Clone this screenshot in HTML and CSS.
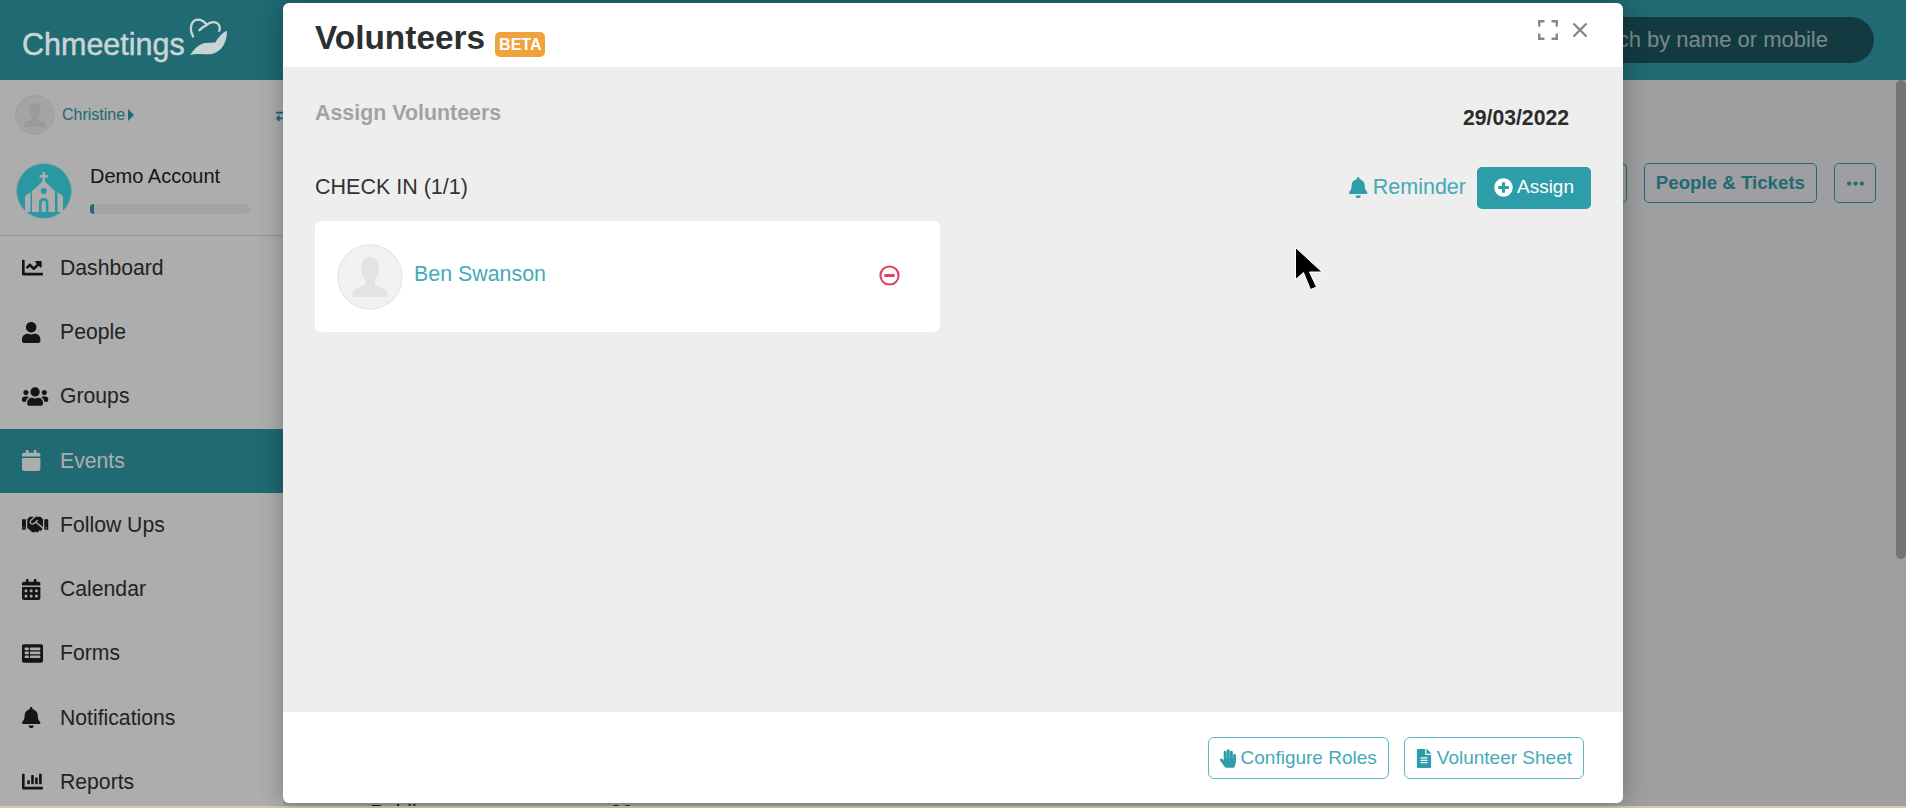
FILE: index.html
```html
<!DOCTYPE html>
<html lang="en">
<head>
  <meta charset="UTF-8" />
  <meta name="viewport" content="width=device-width, initial-scale=1" />
  <title>Volunteers - Chmeetings</title>
  <link rel="stylesheet" href="styles.css">
</head>
<body>
  <svg class="sprite" aria-hidden="true">
    <symbol id="i-chart-line" viewBox="0 0 512 512" preserveAspectRatio="xMinYMid meet"><path d="M496 384H64V80c0-8.84-7.16-16-16-16H16C7.16 64 0 71.16 0 80v336c0 17.67 14.33 32 32 32h464c8.84 0 16-7.16 16-16v-32c0-8.84-7.16-16-16-16zM464 96H345.94c-21.38 0-32.09 25.85-16.97 40.97l32.4 32.4L288 242.75l-73.37-73.37c-12.5-12.5-32.76-12.5-45.25 0l-68.69 68.69c-6.25 6.25-6.25 16.38 0 22.63l22.62 22.62c6.25 6.25 16.38 6.25 22.63 0L192 237.25l73.37 73.37c12.5 12.5 32.76 12.5 45.25 0l96-96 32.4 32.4c15.12 15.12 40.97 4.41 40.97-16.97V112c.01-8.84-7.15-16-15.99-16z"/></symbol>
    <symbol id="i-user" viewBox="0 0 448 512" preserveAspectRatio="xMinYMid meet"><path d="M224 256c70.7 0 128-57.3 128-128S294.7 0 224 0 96 57.3 96 128s57.3 128 128 128zm89.6 32h-16.7c-22.2 10.2-46.9 16-72.9 16s-50.6-5.8-72.9-16h-16.7C60.2 288 0 348.2 0 422.4V464c0 26.5 21.5 48 48 48h352c26.5 0 48-21.5 48-48v-41.6c0-74.2-60.2-134.4-134.4-134.4z"/></symbol>
    <symbol id="i-users" viewBox="0 0 640 512" preserveAspectRatio="xMinYMid meet"><path d="M96 224c35.3 0 64-28.7 64-64s-28.7-64-64-64-64 28.7-64 64 28.7 64 64 64zm448 0c35.3 0 64-28.7 64-64s-28.7-64-64-64-64 28.7-64 64 28.7 64 64 64zm32 32h-64c-17.6 0-33.5 7.1-45.1 18.6 40.3 22.1 68.9 62 75.1 109.4h66c17.7 0 32-14.3 32-32v-32c0-35.3-28.7-64-64-64zm-256 0c61.9 0 112-50.1 112-112S381.9 32 320 32 208 82.1 208 144s50.1 112 112 112zm76.8 32h-8.3c-20.8 10-43.9 16-68.5 16s-47.6-6-68.5-16h-8.3C179.6 288 128 339.6 128 403.2V432c0 26.5 21.5 48 48 48h288c26.5 0 48-21.5 48-48v-28.8c0-63.6-51.6-115.2-115.2-115.2zm-223.7-13.4C161.5 263.1 145.6 256 128 256H64c-35.3 0-64 28.7-64 64v32c0 17.7 14.3 32 32 32h65.9c6.3-47.4 34.9-87.3 75.2-109.4z"/></symbol>
    <symbol id="i-calendar" viewBox="0 0 448 512" preserveAspectRatio="xMinYMid meet"><path d="M12 192h424c6.6 0 12 5.4 12 12v260c0 26.5-21.5 48-48 48H48c-26.5 0-48-21.5-48-48V204c0-6.6 5.4-12 12-12zm436-44v-36c0-26.5-21.5-48-48-48h-48V12c0-6.6-5.4-12-12-12h-40c-6.6 0-12 5.4-12 12v52H160V12c0-6.6-5.4-12-12-12h-40c-6.6 0-12 5.4-12 12v52H48C21.5 64 0 85.5 0 112v36c0 6.6 5.4 12 12 12h424c6.6 0 12-5.4 12-12z"/></symbol>
    <symbol id="i-handshake" viewBox="0 0 640 512" preserveAspectRatio="xMinYMid meet"><path d="M434.7 64h-85.9c-8 0-15.7 3-21.6 8.4l-98.3 90c-.1.1-.2.3-.3.4-16.6 15.6-16.3 40.5-2.1 56 12.7 13.9 39.4 17.6 56.1 2.7.1-.1.3-.1.4-.2l79.9-73.2c6.5-5.9 16.7-5.5 22.6 1 6 6.5 5.5 16.6-1 22.6l-26.1 23.9L504 313.8c2.9 2.4 5.5 5 7.9 7.7V128l-54.6-54.6c-5.9-6-14.1-9.4-22.6-9.4zM544 128.2v223.9c0 17.7 14.3 32 32 32h64V128.2h-96zm48 223.9c-8.8 0-16-7.2-16-16s7.2-16 16-16 16 7.2 16 16-7.2 16-16 16zM0 384h64c17.7 0 32-14.3 32-32V128.2H0V384zm48-63.9c8.8 0 16 7.2 16 16s-7.2 16-16 16-16-7.2-16-16c0-8.9 7.2-16 16-16zm435.9 18.6L334.6 217.5l-30 27.5c-29.7 27.1-75.2 24.5-101.7-4.4-26.9-29.4-24.8-74.9 4.4-101.7L289.1 64h-83.8c-8.5 0-16.6 3.4-22.6 9.4L128 128v223.9h18.3l90.5 81.9c27.4 22.3 67.7 18.1 90-9.3l.2-.2 17.9 15.5c15.9 13 39.4 10.5 52.3-5.4l31.4-38.6 5.4 4.4c13.7 11.1 33.9 9.1 45-4.7l9.5-11.7c11.2-13.8 9.1-33.9-4.6-45.1z"/></symbol>
    <symbol id="i-calendar-alt" viewBox="0 0 448 512" preserveAspectRatio="xMinYMid meet"><path d="M0 464c0 26.5 21.5 48 48 48h352c26.5 0 48-21.5 48-48V192H0v272zm320-196c0-6.6 5.4-12 12-12h40c6.6 0 12 5.4 12 12v40c0 6.6-5.4 12-12 12h-40c-6.6 0-12-5.4-12-12v-40zm0 128c0-6.6 5.4-12 12-12h40c6.6 0 12 5.4 12 12v40c0 6.6-5.4 12-12 12h-40c-6.6 0-12-5.4-12-12v-40zM192 268c0-6.6 5.4-12 12-12h40c6.6 0 12 5.4 12 12v40c0 6.6-5.4 12-12 12h-40c-6.6 0-12-5.4-12-12v-40zm0 128c0-6.6 5.4-12 12-12h40c6.6 0 12 5.4 12 12v40c0 6.6-5.4 12-12 12h-40c-6.6 0-12-5.4-12-12v-40zM64 268c0-6.6 5.4-12 12-12h40c6.6 0 12 5.4 12 12v40c0 6.6-5.4 12-12 12H76c-6.6 0-12-5.4-12-12v-40zm0 128c0-6.6 5.4-12 12-12h40c6.6 0 12 5.4 12 12v40c0 6.6-5.4 12-12 12H76c-6.6 0-12-5.4-12-12v-40zM400 64h-48V16c0-8.8-7.2-16-16-16h-32c-8.8 0-16 7.2-16 16v48H160V16c0-8.8-7.2-16-16-16h-32c-8.8 0-16 7.2-16 16v48H48C21.5 64 0 85.5 0 112v48h448v-48c0-26.5-21.5-48-48-48z"/></symbol>
    <symbol id="i-forms" viewBox="0 0 512 512" preserveAspectRatio="xMinYMid meet"><path fill-rule="evenodd" d="M48 32h416c26.5 0 48 21.5 48 48v352c0 26.5-21.5 48-48 48H48c-26.5 0-48-21.5-48-48V80c0-26.5 21.5-48 48-48zM80 112c-8 0-16 8-16 16v32c0 8 8 16 16 16h72c8 0 16-8 16-16v-32c0-8-8-16-16-16zm128 0c-8 0-16 8-16 16v32c0 8 8 16 16 16h224c8 0 16-8 16-16v-32c0-8-8-16-16-16zM80 208c-8 0-16 8-16 16v32c0 8 8 16 16 16h72c8 0 16-8 16-16v-32c0-8-8-16-16-16zm128 0c-8 0-16 8-16 16v32c0 8 8 16 16 16h224c8 0 16-8 16-16v-32c0-8-8-16-16-16zM80 304c-8 0-16 8-16 16v32c0 8 8 16 16 16h72c8 0 16-8 16-16v-32c0-8-8-16-16-16zm128 0c-8 0-16 8-16 16v32c0 8 8 16 16 16h224c8 0 16-8 16-16v-32c0-8-8-16-16-16z"/></symbol>
    <symbol id="i-bell" viewBox="0 0 448 512" preserveAspectRatio="xMinYMid meet"><path d="M224 512c35.32 0 63.97-28.65 63.97-64H160.03c0 35.35 28.65 64 63.97 64zm215.39-149.71c-19.32-20.76-55.47-51.99-55.47-154.29 0-77.7-54.48-139.9-127.94-155.16V32c0-17.67-14.32-32-31.98-32s-31.98 14.33-31.98 32v20.84C118.56 68.1 64.08 130.3 64.08 208c0 102.3-36.15 133.53-55.47 154.29-6 6.45-8.66 14.16-8.61 21.71.11 16.4 12.98 32 32.1 32h383.8c19.12 0 32-15.6 32.1-32 .05-7.55-2.61-15.27-8.61-21.71z"/></symbol>
    <symbol id="i-chart-bar" viewBox="0 0 512 512" preserveAspectRatio="xMinYMid meet"><path d="M332.8 320h38.4c6.4 0 12.8-6.4 12.8-12.8V172.8c0-6.4-6.4-12.8-12.8-12.8h-38.4c-6.4 0-12.8 6.4-12.8 12.8v134.4c0 6.4 6.4 12.8 12.8 12.8zm96 0h38.4c6.4 0 12.8-6.4 12.8-12.8V76.8c0-6.4-6.4-12.8-12.8-12.8h-38.4c-6.4 0-12.8 6.4-12.8 12.8v230.4c0 6.4 6.4 12.8 12.8 12.8zm-288 0h38.4c6.4 0 12.8-6.4 12.8-12.8v-70.4c0-6.4-6.4-12.8-12.8-12.8h-38.4c-6.4 0-12.8 6.4-12.8 12.8v70.4c0 6.4 6.4 12.8 12.8 12.8zm96 0h38.4c6.4 0 12.8-6.4 12.8-12.8V108.8c0-6.4-6.4-12.8-12.8-12.8h-38.4c-6.4 0-12.8 6.4-12.8 12.8v198.4c0 6.4 6.4 12.8 12.8 12.8zM496 384H64V80c0-8.84-7.16-16-16-16H16C7.16 64 0 71.16 0 80v336c0 17.67 14.33 32 32 32h464c8.84 0 16-7.16 16-16v-32c0-8.84-7.16-16-16-16z"/></symbol>
    <symbol id="i-plus-circle" viewBox="0 0 512 512"><path d="M256 8C119 8 8 119 8 256s111 248 248 248 248-111 248-248S393 8 256 8zm144 276c0 6.6-5.4 12-12 12h-92v92c0 6.6-5.4 12-12 12h-56c-6.6 0-12-5.4-12-12v-92h-92c-6.6 0-12-5.4-12-12v-56c0-6.6 5.4-12 12-12h92v-92c0-6.6 5.4-12 12-12h56c6.6 0 12 5.4 12 12v92h92c6.6 0 12 5.4 12 12v56z"/></symbol>
    <symbol id="i-hand" viewBox="0 0 448 512"><path d="M408.781 128.007C386.356 127.578 368 146.36 368 168.79V256h-8V79.79c0-22.43-18.356-41.212-40.781-40.783C297.488 39.423 280 57.169 280 79v177h-8V40.79C272 18.36 253.644-.422 231.219.007 209.488.423 192 18.169 192 40v216h-8V80.79c0-22.43-18.356-41.212-40.781-40.783C121.488 40.423 104 58.169 104 80v235.992l-31.648-43.519c-12.993-17.866-38.009-21.817-55.877-8.823-17.865 12.994-21.815 38.01-8.822 55.877l125.601 172.705A48 48 0 0 0 172.073 512h197.59c22.274 0 41.622-15.324 46.724-37.006l26.508-112.66a192.011 192.011 0 0 0 5.104-43.975V168c.001-21.831-17.487-39.577-39.218-39.993z"/></symbol>
    <symbol id="i-file" viewBox="0 0 384 512"><path d="M224 136V0H24C10.7 0 0 10.7 0 24v464c0 13.3 10.7 24 24 24h336c13.3 0 24-10.7 24-24V160H248c-13.2 0-24-10.8-24-24zm64 236c0 6.6-5.4 12-12 12H108c-6.6 0-12-5.4-12-12v-8c0-6.6 5.4-12 12-12h168c6.6 0 12 5.4 12 12v8zm0-64c0 6.6-5.4 12-12 12H108c-6.6 0-12-5.4-12-12v-8c0-6.6 5.4-12 12-12h168c6.6 0 12 5.4 12 12v8zm0-72v8c0 6.6-5.4 12-12 12H108c-6.6 0-12-5.4-12-12v-8c0-6.6 5.4-12 12-12h168c6.6 0 12 5.4 12 12zm96-114.1v6.1H256V0h6.1c6.4 0 12.5 2.5 17 7l97.9 98c4.5 4.5 7 10.6 7 16.9z"/></symbol>
    <symbol id="i-exchange" viewBox="0 0 512 512"><path d="M0 168v-16c0-13.255 10.745-24 24-24h360V80c0-21.367 25.899-32.042 40.971-16.971l80 80c9.372 9.373 9.372 24.569 0 33.941l-80 80C409.956 271.982 384 261.456 384 240v-48H24c-13.255 0-24-10.745-24-24zm488 152H128v-48c0-21.314-25.862-32.08-40.971-16.971l-80 80c-9.372 9.373-9.372 24.569 0 33.941l80 80C102.057 463.997 128 453.437 128 432v-48h360c13.255 0 24-10.745 24-24v-16c0-13.255-10.745-24-24-24z"/></symbol>
    <symbol id="i-avatar" viewBox="0 0 66 66">
      <circle cx="33" cy="33" r="32" fill="#f2f2f2" stroke="#e8e8e8" stroke-width="1.5"/>
      <path fill="#e2e3e3" d="M33 13c-6 0-9 5-9 11 0 5 2 9 4 12v3c0 3-5 4-9 6-3 1-4 3-4 6v2h36v-2c0-3-1-5-4-6-4-2-9-3-9-6v-3c2-3 4-7 4-12 0-6-3-11-9-11z"/>
    </symbol>
  </svg>

  <div class="app">
    <header class="topbar">
      <div class="logo">
        <span class="logo-text">Chmeetings</span>
        <svg class="logo-mark" viewBox="0 0 118 115" aria-hidden="true">
          <path fill="none" stroke="currentColor" stroke-width="7" stroke-linecap="round" d="M14 56C1 32 8 6 28 5c14 0 22 8 27 16 10-10 30-13 38 2 3 6 2 11 0 16M55 21c-8 4-16 9-22 16"/>
          <path fill="currentColor" d="M5 112c14-20 26-32 46-36l30-2c8-14 20-28 35-36 2 38-20 72-56 72-20 0-35-4-55 2z"/>
        </svg>
      </div>
      <div class="search">
        <input type="text" placeholder="Search by name or mobile" aria-label="Search by name or mobile" />
      </div>
    </header>

    <div class="layout">
      <aside class="sidebar">
        <div class="user-row">
          <svg class="user-avatar"><use href="#i-avatar"/></svg>
          <span class="user-name">Christine</span>
          <span class="user-caret"></span>
          <svg class="user-switch"><use href="#i-exchange"/></svg>
        </div>
        <div class="account">
          <svg class="account-logo" viewBox="0 0 56 56" aria-hidden="true">
            <circle cx="28" cy="28" r="27.5" fill="#3de0ee" stroke="#d8eef0" stroke-width="1"/>
            <path fill="#fff" d="M26.5 9h2.5v3h3v2.5h-3v4l10 9.5v21H16V28l10.5-9.5v-4h-3V12h3zM9 33l5.5-4v20H9zM47 33l-5.5-4v20H47z"/>
            <circle cx="27.7" cy="28" r="3" fill="#3de0ee"/>
            <path fill="#3de0ee" d="M23 49V40c0-3 2-5 4.7-5s4.700 2 4.700 5v9h-2.500v-9c0-1.500-1-2.500-2.200-2.500s-2.200 1-2.200 2.500v9z"/>
          </svg>
          <div class="account-info">
            <span class="account-name">Demo Account</span>
            <div class="progress"><div class="progress-fill"></div></div>
          </div>
        </div>
        <nav class="nav">
          <a class="nav-item"><svg class="nav-icon"><use href="#i-chart-line"/></svg>Dashboard</a>
          <a class="nav-item"><svg class="nav-icon"><use href="#i-user"/></svg>People</a>
          <a class="nav-item"><svg class="nav-icon"><use href="#i-users"/></svg>Groups</a>
          <a class="nav-item active"><svg class="nav-icon"><use href="#i-calendar"/></svg>Events</a>
          <a class="nav-item"><svg class="nav-icon"><use href="#i-handshake"/></svg>Follow Ups</a>
          <a class="nav-item"><svg class="nav-icon"><use href="#i-calendar-alt"/></svg>Calendar</a>
          <a class="nav-item"><svg class="nav-icon"><use href="#i-forms"/></svg>Forms</a>
          <a class="nav-item"><svg class="nav-icon"><use href="#i-bell"/></svg>Notifications</a>
          <a class="nav-item"><svg class="nav-icon"><use href="#i-chart-bar"/></svg>Reports</a>
        </nav>
      </aside>

      <main class="content">
        <div class="toolbar">
          <button class="tool-btn tool-edit" aria-label="Edit"></button>
          <button class="tool-btn">People &amp; Tickets</button>
          <button class="tool-btn tool-more" aria-label="More">
            <svg viewBox="0 0 24 6"><circle cx="3" cy="3" r="3"/><circle cx="12" cy="3" r="3"/><circle cx="21" cy="3" r="3"/></svg>
          </button>
        </div>
        <div class="event-row">
          <span class="event-type">Public</span>
          <span class="event-count">30</span>
        </div>
      </main>
    </div>

    <div class="scrollbar"></div>
    <div class="backdrop"></div>
  </div>

  <div class="modal" role="dialog" aria-label="Volunteers">
    <div class="modal-header">
      <h1 class="modal-title">Volunteers</h1>
      <span class="badge">BETA</span>
      <div class="modal-actions">
        <svg class="icon-expand" viewBox="0 0 20 20" aria-hidden="true">
          <path fill="none" stroke="currentColor" stroke-width="2.5" d="M1.2 6.5V1.2h5.3M13.5 1.2h5.3v5.3M18.8 13.5v5.3h-5.3M6.5 18.800H1.200v-5.300"/>
        </svg>
        <svg class="icon-close" viewBox="0 0 16 16" aria-hidden="true">
          <path fill="none" stroke="currentColor" stroke-width="2.4" d="M1.5 1.5l13 13M14.5 1.5l-13 13"/>
        </svg>
      </div>
    </div>

    <div class="modal-body">
      <div class="assign-head">
        <h2 class="assign-title">Assign Volunteers</h2>
        <span class="assign-date">29/03/2022</span>
      </div>
      <div class="role-row">
        <span class="role-name">CHECK IN (1/1)</span>
        <div class="role-actions">
          <a class="reminder"><svg class="reminder-icon"><use href="#i-bell"/></svg>Reminder</a>
          <button class="assign-btn"><svg class="assign-icon"><use href="#i-plus-circle"/></svg>Assign</button>
        </div>
      </div>
      <div class="person-card">
        <svg class="person-avatar"><use href="#i-avatar"/></svg>
        <a class="person-name">Ben Swanson</a>
        <svg class="person-remove" viewBox="0 0 22 22" aria-hidden="true">
          <circle cx="11" cy="11" r="9.5" fill="none" stroke="currentColor" stroke-width="2.2"/>
          <rect x="5.5" y="9.5" width="11" height="3" rx="1" fill="currentColor"/>
        </svg>
      </div>
    </div>

    <div class="modal-footer">
      <button class="outline-btn"><svg class="btn-icon"><use href="#i-hand"/></svg>Configure Roles</button>
      <button class="outline-btn"><svg class="btn-icon"><use href="#i-file"/></svg>Volunteer Sheet</button>
    </div>
  </div>

  <svg class="cursor" viewBox="0 0 28 43" aria-hidden="true">
    <path fill="#000" stroke="#fff" stroke-width="1" d="M.5.5v32l8-7 7 17 6-2.5-7-15h12.5z"/>
  </svg>
</body>
</html>
```

FILE: styles.css
```css
:root {
  --teal: #2e9daa;
  --teal-text: #45aab6;
  --font-family: "Liberation Sans", Arial, sans-serif;
}

html, body {
  height: 100%;
  overflow: hidden;
}

body {
  margin: 0;
  background: #d8c9a3;
  font-family: var(--font-family);
  color: #333;
}

.sprite {
  position: absolute;
  width: 0;
  height: 0;
}

svg {
  fill: currentColor;
}

button {
  font-family: inherit;
  cursor: pointer;
}

/* page behind the dialog */
.app {
  position: relative;
  height: 806px;
  display: flex;
  flex-direction: column;
  overflow: hidden;
}

.topbar {
  flex: 0 0 80px;
  display: flex;
  align-items: center;
  justify-content: space-between;
  background: var(--teal);
  padding: 0 32px 0 22px;
}

.logo {
  position: relative;
  z-index: 1;
  display: flex;
  align-items: center;
  gap: 3px;
  color: #c9d5d5;
}

.logo-text {
  font-size: 30.5px;
  padding-top: 8px;
  -webkit-text-stroke: 0.5px #c9d5d5;
}

.logo-mark {
  width: 40px;
  height: 38px;
  margin-bottom: 6px;
}

.search input {
  display: block;
  width: 314px;
  height: 46px;
  box-sizing: border-box;
  border: none;
  border-radius: 23px;
  padding: 0 46px 0 0;
  text-align: right;
  background: #1b5761;
  font-family: inherit;
  font-size: 22px;
}

.search input::placeholder {
  color: #b8c8ca;
  opacity: 1;
}

.layout {
  flex: 1;
  display: flex;
  min-height: 0;
}

.sidebar {
  flex: 0 0 283px;
  background: #fff;
}

.user-row {
  height: 70px;
  display: flex;
  align-items: center;
  padding-left: 15px;
}

.user-avatar {
  width: 40px;
  height: 40px;
  margin-top: -1px;
}

.user-name {
  margin-left: 7px;
  font-size: 16px;
  color: var(--teal);
}

.user-caret {
  margin-left: 3px;
  border-left: 6px solid var(--teal);
  border-top: 6px solid transparent;
  border-bottom: 6px solid transparent;
}

.user-switch {
  width: 15px;
  height: 15px;
  margin-left: auto;
  margin-right: -8px;
  color: var(--teal);
}

.account {
  height: 84.75px;
  display: flex;
  gap: 18px;
  padding-left: 16px;
  border-bottom: 1px solid #d8d8d8;
}

.account-logo {
  width: 56px;
  height: 56px;
  margin-top: 13px;
}

.account-info {
  padding-top: 14px;
}

.account-name {
  display: block;
  font-size: 20px;
  line-height: 24px;
  color: #222;
}

.progress {
  width: 160px;
  height: 10px;
  margin-top: 16px;
  border-radius: 5px;
  background: #f0f0f0;
}

.progress-fill {
  width: 4px;
  height: 10px;
  border-radius: 5px 0 0 5px;
  background: var(--teal);
}

.nav-item {
  height: 64.25px;
  display: flex;
  align-items: center;
  font-size: 21.2px;
  color: #333;
}

.nav-icon {
  flex: 0 0 27px;
  width: 27px;
  height: 21px;
  margin: 0 11px 0 22px;
  color: #1f1f1f;
}

.nav-item.active {
  background: var(--teal);
  color: #fff;
}

.nav-item.active .nav-icon {
  color: #fff;
}

.content {
  flex: 1;
  min-width: 0;
  background: #ebebed;
  overflow: hidden;
}

.toolbar {
  display: flex;
  justify-content: flex-end;
  gap: 17px;
  padding: 83px 30px 0 0;
}

.tool-btn {
  height: 40px;
  padding: 0 11px;
  background: transparent;
  border: 1.5px solid var(--teal);
  border-radius: 5px;
  font-size: 18.7px;
  font-weight: bold;
  color: var(--teal);
}

.tool-edit {
  width: 100px;
}

.tool-more {
  width: 42px;
  padding: 0;
}

.tool-more svg {
  display: block;
  width: 17px;
  height: 5px;
  margin: 0 auto;
}

.event-row {
  display: flex;
  padding: 0 0 0 87px;
  margin-top: 597px;
  font-size: 21px;
  color: #222;
}

.event-type {
  width: 240px;
}

.scrollbar {
  position: absolute;
  top: 80px;
  right: 0;
  width: 10px;
  height: 479px;
  border-radius: 5px;
  background: #ababab;
}

.backdrop {
  position: absolute;
  inset: 0;
  background: rgba(0, 0, 0, 0.32);
}

/* dialog */
.modal {
  position: absolute;
  top: 3px;
  left: 283px;
  width: 1340px;
  height: 800px;
  display: flex;
  flex-direction: column;
  background: #fff;
  border-radius: 6px;
  overflow: hidden;
  box-shadow: 0 0 24px rgba(0, 0, 0, 0.3);
}

.modal-header {
  flex: 0 0 64px;
  display: flex;
  align-items: center;
  padding: 0 32px;
}

.modal-title {
  margin: 0;
  padding-top: 6px;
  font-size: 33.4px;
  font-weight: bold;
  color: #2d2f31;
}

.badge {
  margin: 18px 0 0 10px;
  padding: 0 4px;
  height: 25px;
  line-height: 26px;
  border-radius: 5px;
  background: #f0a33c;
  color: #fff;
  font-size: 16px;
  font-weight: bold;
}

.modal-actions {
  margin-left: auto;
  display: flex;
  align-items: center;
  gap: 14px;
  padding-right: 3px;
  margin-top: -10px;
  color: #888;
}

.icon-expand {
  width: 20px;
  height: 20px;
}

.icon-close {
  width: 16px;
  height: 16px;
}

.modal-body {
  flex: 1;
  background: #eeeeee;
  padding: 32px 32px 0;
}

.assign-head {
  display: flex;
  justify-content: space-between;
}

.assign-title {
  margin: 0;
  font-size: 21.4px;
  line-height: 28px;
  font-weight: bold;
  color: #a2a2a2;
}

.assign-date {
  margin: 5px 22px 0 0;
  font-size: 21.2px;
  line-height: 28px;
  font-weight: bold;
  color: #2b2b2b;
}

.role-row {
  display: flex;
  align-items: center;
  justify-content: space-between;
  margin-top: 35px;
}

.role-name {
  padding-bottom: 2px;
  font-size: 21.5px;
  color: #333;
}

.role-actions {
  display: flex;
  align-items: center;
  gap: 11px;
}

.reminder {
  display: flex;
  align-items: center;
  gap: 5px;
  padding-bottom: 2px;
  font-size: 21.5px;
  color: var(--teal-text);
}

.reminder-icon {
  width: 19px;
  height: 21px;
  color: var(--teal);
}

.assign-btn {
  height: 42px;
  display: flex;
  align-items: center;
  gap: 4px;
  padding: 0 17px 2px;
  background: var(--teal);
  border: none;
  border-radius: 5px;
  color: #fff;
  font-size: 19px;
}

.assign-icon {
  width: 19px;
  height: 19px;
}

.person-card {
  width: 625px;
  height: 111px;
  box-sizing: border-box;
  margin-top: 12px;
  display: flex;
  align-items: center;
  padding: 0 40px 0 22px;
  background: #fff;
  border-radius: 6px;
}

.person-avatar {
  width: 66px;
  height: 66px;
}

.person-name {
  margin: 0 0 4px 11px;
  font-size: 21.4px;
  color: var(--teal-text);
}

.person-remove {
  width: 21px;
  height: 21px;
  margin: 0 0 2px auto;
  color: #d9455f;
}

.modal-footer {
  flex: 0 0 91px;
  display: flex;
  justify-content: flex-end;
  gap: 15px;
  box-sizing: border-box;
  padding: 25px 39px 0 0;
}

.outline-btn {
  height: 42px;
  display: flex;
  align-items: center;
  gap: 5px;
  padding: 0 11px;
  background: #fff;
  border: 1.5px solid #5fb5c1;
  border-radius: 6px;
  font-size: 19px;
  color: var(--teal-text);
}

.btn-icon {
  width: 16px;
  height: 19px;
  color: var(--teal);
}

.cursor {
  position: absolute;
  top: 247px;
  left: 1295px;
  width: 28px;
  height: 43px;
}
```
